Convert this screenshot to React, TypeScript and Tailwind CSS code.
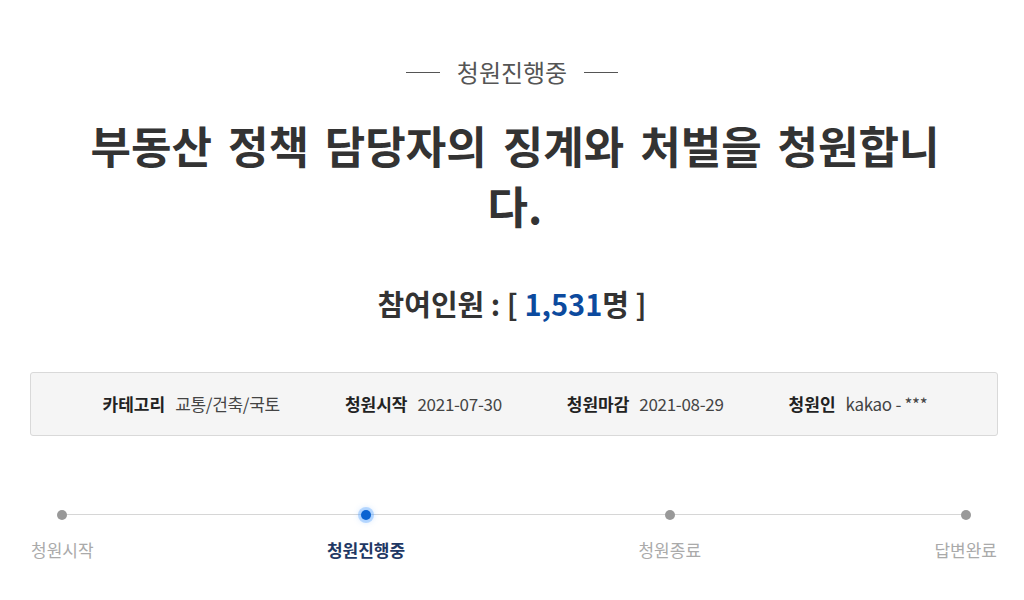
const FONT = "font-['Noto_Sans_CJK_KR','Noto_Sans',sans-serif]";

const INFO = [
  { label: "카테고리", value: "교통/건축/국토" },
  { label: "청원시작", value: "2021-07-30" },
  { label: "청원마감", value: "2021-08-29" },
  { label: "청원인", value: "kakao - ***" },
];

const STEPS = [
  { name: "청원시작", active: false },
  { name: "청원진행중", active: true },
  { name: "청원종료", active: false },
  { name: "답변완료", active: false },
];

export default function App() {
  return (
    <div className={`${FONT} w-[1024px] h-[600px] overflow-hidden bg-white text-[#333]`}>
      <div className="pt-[56px] flex items-center justify-center gap-[17px]">
        <span className="w-[34px] h-px bg-[#555]" />
        <span className="text-[24px] leading-8 text-[#555]">청원진행중</span>
        <span className="w-[34px] h-px bg-[#555]" />
      </div>

      <h1 className="mt-[27px] mx-auto w-[880px] pl-[6px] text-center text-[44px] leading-[60px] font-bold text-[#333] [word-spacing:6px]">
        부동산 정책 담당자의 징계와 처벌을 청원합니다.
      </h1>

      <div className="mt-[50px] text-center text-[29px] leading-9 font-bold text-[#333]">
        참여인원 : [ <span className="text-[#0c4a9e]">1,531</span>명 ]
      </div>

      <div className="mt-[51px] ml-[30px] mr-[26px] pl-[2px] h-[64px] rounded-[3px] border border-[#d9d9d9] bg-[#f5f5f5] flex items-center justify-center gap-[65px] text-[17px]">
        {INFO.map((item) => (
          <div key={item.label} className="flex items-center gap-[10px]">
            <span className="font-bold text-[#222]">{item.label}</span>
            <span className="text-[#444] tracking-[-0.3px]">{item.value}</span>
          </div>
        ))}
      </div>

      <div className="relative mt-[74px] ml-[31px] mr-[27px] flex justify-between">
        <div className="absolute left-[31px] right-[31px] top-[4px] h-px bg-[#d6d6d6]" />
        {STEPS.map((step) => (
          <div key={step.name} className="relative flex flex-col items-center">
            {step.active ? (
              <span className="w-[10px] h-[10px] rounded-full bg-[#0a63d1] shadow-[0_0_0_3px_rgba(80,160,255,0.35),0_0_6px_2px_rgba(80,160,255,0.3)]" />
            ) : (
              <span className="w-[10px] h-[10px] rounded-full bg-[#999]" />
            )}
            <span
              className={
                step.active
                  ? "mt-[18px] text-[17px] leading-6 font-bold text-[#1f3864]"
                  : "mt-[18px] text-[17px] leading-6 text-[#aaa]"
              }
            >
              {step.name}
            </span>
          </div>
        ))}
      </div>
    </div>
  );
}
